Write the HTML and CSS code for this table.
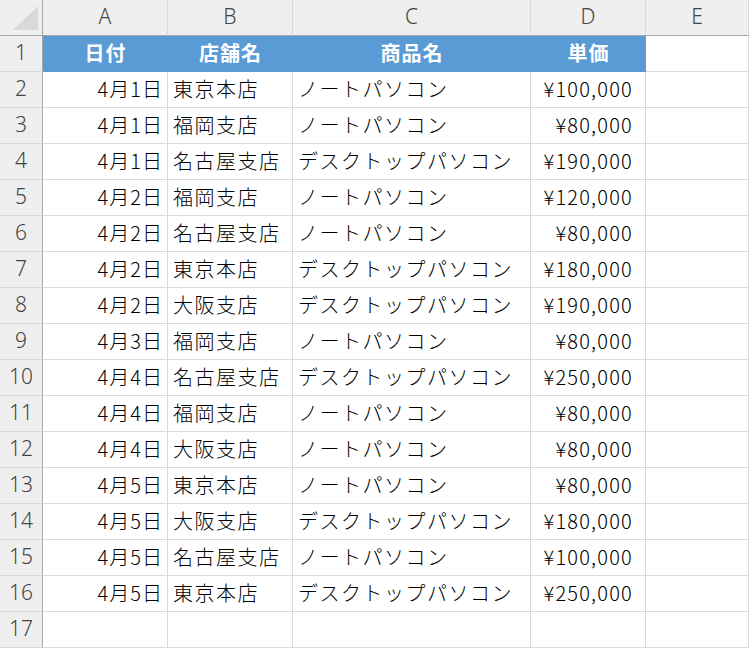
FILE: index.html
```html
<!DOCTYPE html>
<html lang="ja">
<head>
<meta charset="utf-8">
<link rel="stylesheet" href="styles.css">
</head>
<body>
<div class="sheet">
  <div class="corner"><svg width="30" height="28" viewBox="0 0 30 28"><polygon points="28,2 28,26 3,26" fill="#d9d9d9"/></svg></div>
  <div class="colh">A</div><div class="colh">B</div><div class="colh">C</div><div class="colh">D</div><div class="colh">E</div>

  <div class="rowh">1</div><div class="cell th">日付</div><div class="cell th">店舗名</div><div class="cell th">商品名</div><div class="cell th">単価</div><div class="cell"></div>
  <div class="rowh">2</div><div class="cell r">4月1日</div><div class="cell l">東京本店</div><div class="cell l">ノートパソコン</div><div class="cell p">¥100,000</div><div class="cell"></div>
  <div class="rowh">3</div><div class="cell r">4月1日</div><div class="cell l">福岡支店</div><div class="cell l">ノートパソコン</div><div class="cell p">¥80,000</div><div class="cell"></div>
  <div class="rowh">4</div><div class="cell r">4月1日</div><div class="cell l">名古屋支店</div><div class="cell l">デスクトップパソコン</div><div class="cell p">¥190,000</div><div class="cell"></div>
  <div class="rowh">5</div><div class="cell r">4月2日</div><div class="cell l">福岡支店</div><div class="cell l">ノートパソコン</div><div class="cell p">¥120,000</div><div class="cell"></div>
  <div class="rowh">6</div><div class="cell r">4月2日</div><div class="cell l">名古屋支店</div><div class="cell l">ノートパソコン</div><div class="cell p">¥80,000</div><div class="cell"></div>
  <div class="rowh">7</div><div class="cell r">4月2日</div><div class="cell l">東京本店</div><div class="cell l">デスクトップパソコン</div><div class="cell p">¥180,000</div><div class="cell"></div>
  <div class="rowh">8</div><div class="cell r">4月2日</div><div class="cell l">大阪支店</div><div class="cell l">デスクトップパソコン</div><div class="cell p">¥190,000</div><div class="cell"></div>
  <div class="rowh">9</div><div class="cell r">4月3日</div><div class="cell l">福岡支店</div><div class="cell l">ノートパソコン</div><div class="cell p">¥80,000</div><div class="cell"></div>
  <div class="rowh">10</div><div class="cell r">4月4日</div><div class="cell l">名古屋支店</div><div class="cell l">デスクトップパソコン</div><div class="cell p">¥250,000</div><div class="cell"></div>
  <div class="rowh">11</div><div class="cell r">4月4日</div><div class="cell l">福岡支店</div><div class="cell l">ノートパソコン</div><div class="cell p">¥80,000</div><div class="cell"></div>
  <div class="rowh">12</div><div class="cell r">4月4日</div><div class="cell l">大阪支店</div><div class="cell l">ノートパソコン</div><div class="cell p">¥80,000</div><div class="cell"></div>
  <div class="rowh">13</div><div class="cell r">4月5日</div><div class="cell l">東京本店</div><div class="cell l">ノートパソコン</div><div class="cell p">¥80,000</div><div class="cell"></div>
  <div class="rowh">14</div><div class="cell r">4月5日</div><div class="cell l">大阪支店</div><div class="cell l">デスクトップパソコン</div><div class="cell p">¥180,000</div><div class="cell"></div>
  <div class="rowh">15</div><div class="cell r">4月5日</div><div class="cell l">名古屋支店</div><div class="cell l">ノートパソコン</div><div class="cell p">¥100,000</div><div class="cell"></div>
  <div class="rowh">16</div><div class="cell r">4月5日</div><div class="cell l">東京本店</div><div class="cell l">デスクトップパソコン</div><div class="cell p">¥250,000</div><div class="cell"></div>
  <div class="rowh">17</div><div class="cell"></div><div class="cell"></div><div class="cell"></div><div class="cell"></div><div class="cell"></div>
</div>
</body>
</html>
```

FILE: styles.css
```css
html, body {
  margin: 0;
  padding: 0;
  background: #ffffff;
}
.sheet {
  display: grid;
  grid-template-columns: 43px 125px 125px 238px 115px 103px;
  grid-auto-rows: 36px;
  width: 749px;
  font-family: "Noto Sans CJK JP", "Noto Sans", sans-serif;
  font-size: 20px;
  font-weight: 300;
  color: #000;
}
.sheet > div {
  box-sizing: border-box;
  display: flex;
  align-items: center;
  white-space: nowrap;
  overflow: hidden;
  padding-bottom: 3px;
}
.corner {
  background: #efefef;
  border-right: 1px solid #a6a6a6;
  border-bottom: 1px solid #a6a6a6;
  justify-content: flex-start;
  padding-left: 10px;
}
.sheet > .corner {
  padding-bottom: 0;
}
.colh {
  background: #efefef;
  color: #444;
  justify-content: center;
  border-right: 1px solid #d9d9d9;
  border-bottom: 1px solid #a6a6a6;
  font-family: "Noto Sans", sans-serif;
  font-size: 21px;
  font-weight: 300;
}
.rowh {
  background: #efefef;
  color: #444;
  justify-content: center;
  border-right: 1px solid #a6a6a6;
  border-bottom: 1px solid #d9d9d9;
  font-family: "Noto Sans", sans-serif;
  font-size: 21px;
  font-weight: 300;
}
.cell {
  border-right: 1px solid #dadada;
  border-bottom: 1px solid #dadada;
}
.th {
  background: #5b9bd5;
  color: #fff;
  font-weight: bold;
  justify-content: center;
  border-right: none;
  border-bottom-color: #5b9bd5;
  letter-spacing: 1px;
}
.r {
  justify-content: flex-end;
  padding-right: 4px;
  letter-spacing: 1px;
}
.l {
  justify-content: flex-start;
  padding-left: 5px;
  letter-spacing: 1.5px;
}
.p {
  justify-content: flex-end;
  padding-right: 12px;
  letter-spacing: 1.2px;
}
```
